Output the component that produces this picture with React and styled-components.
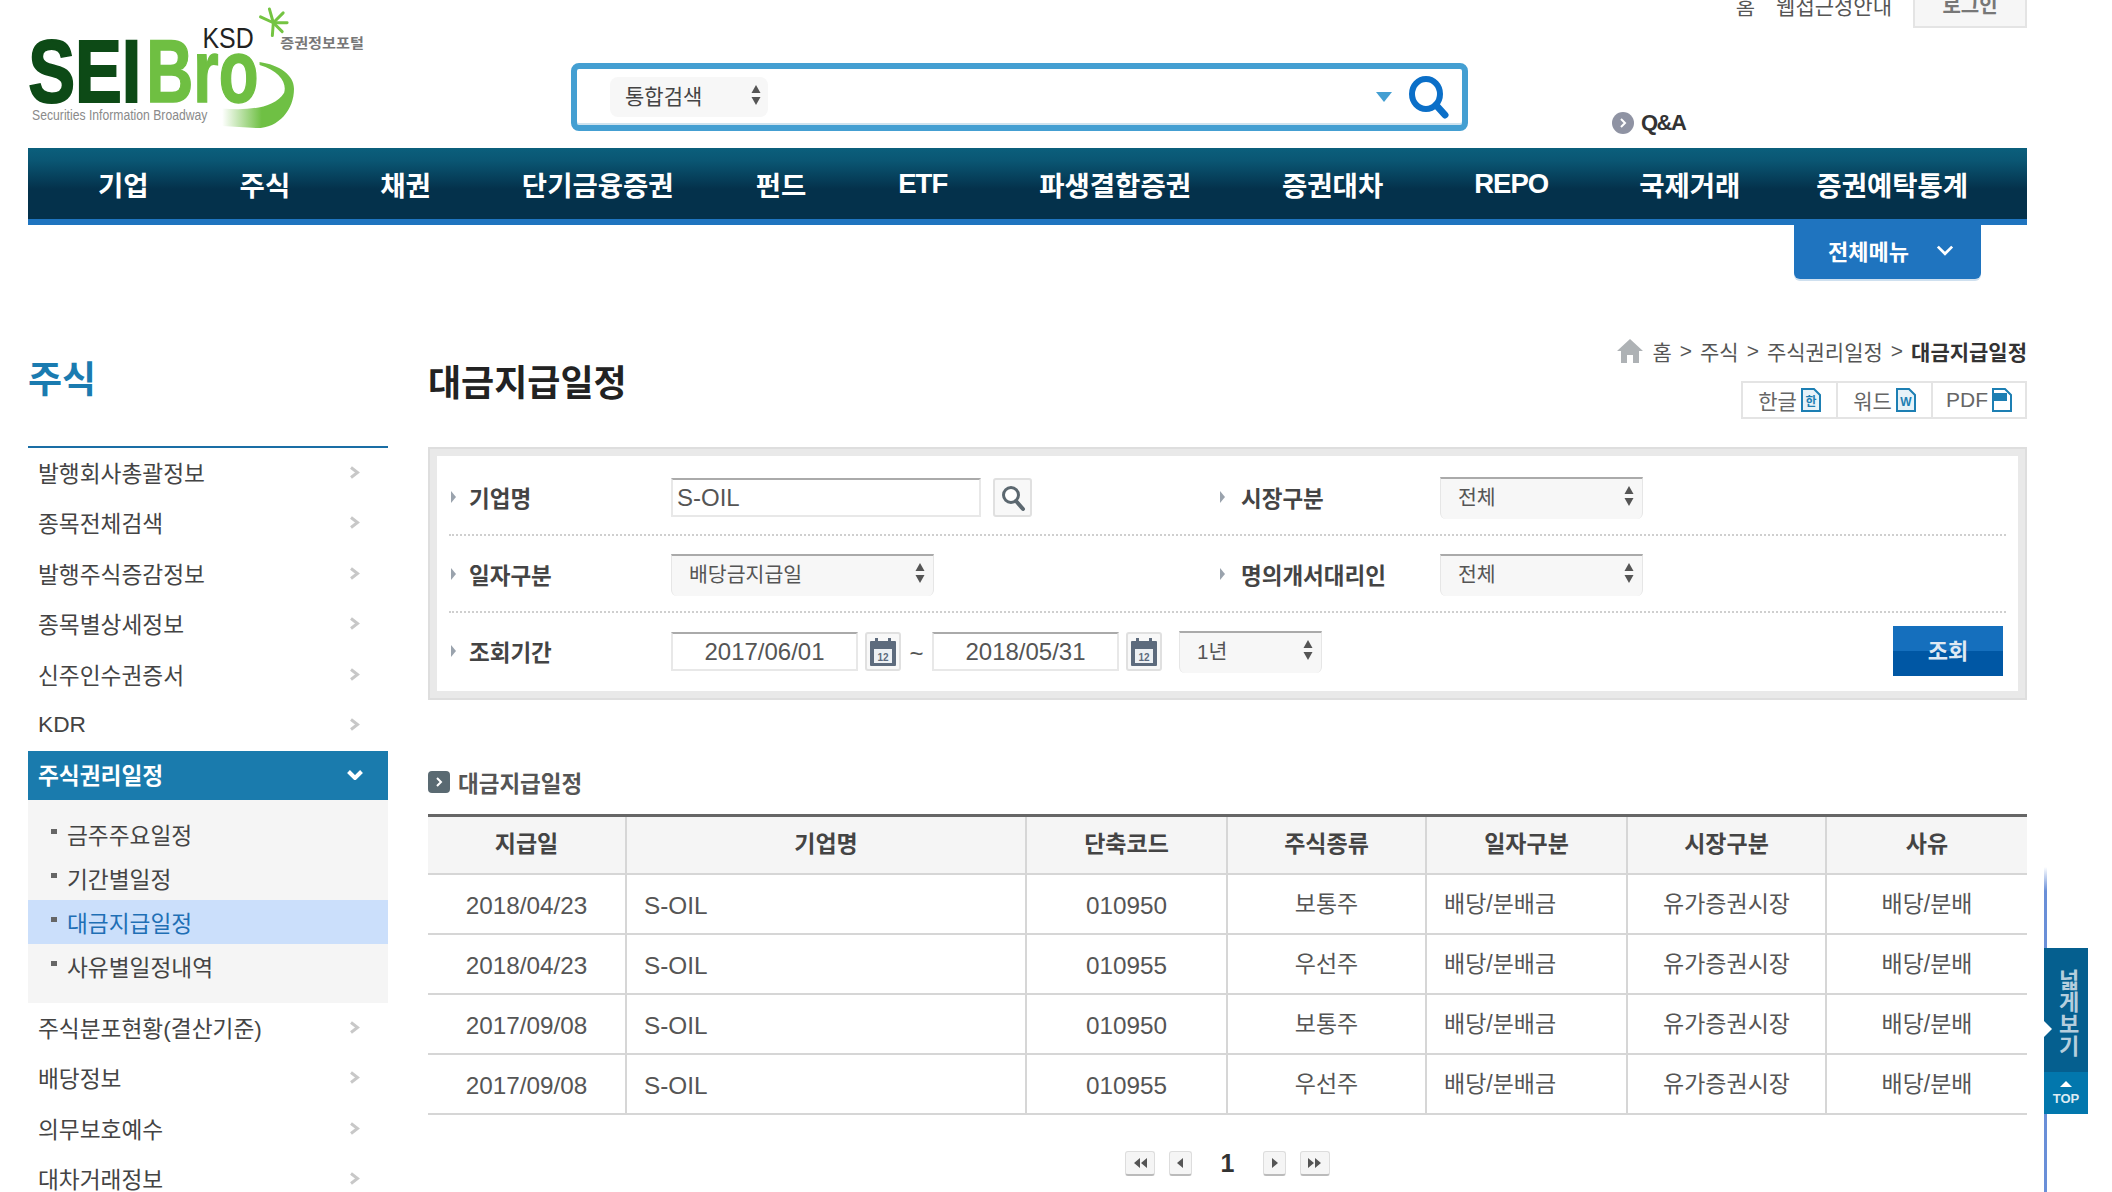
import React from "react";
import styled, { createGlobalStyle } from "styled-components";

const Global = createGlobalStyle`
  html, body { margin: 0; padding: 0; background: #fff; }
  body { font-family: "Liberation Sans", "Noto Sans CJK KR", sans-serif; color: #555; }
  * { box-sizing: border-box; }
  ul { list-style: none; margin: 0; padding: 0; }
`;

const Page = styled.div`
  position: relative;
  width: 2112px;
  height: 1192px;
  overflow: hidden;
  padding: 0 85px 0 28px;
`;

/* ---------- header ---------- */
const Header = styled.header`
  display: grid;
  grid-template-columns: 543px 897px 1fr;
  height: 148px;
`;
const LogoWrap = styled.div`
  padding-top: 6px;
  svg { display: block; }
`;
const SearchBox = styled.div`
  margin-top: 63px;
  height: 68px;
  border: 6px solid #449fd2;
  border-radius: 8px;
  display: flex;
  align-items: center;
  padding: 0 12px 0 33px;
  box-shadow: inset 0 -2px 0 #cfe3ef;
`;
const SearchSelect = styled.div`
  width: 158px;
  height: 40px;
  background: #f7f7f7;
  border-radius: 8px;
  display: flex;
  align-items: center;
  justify-content: space-between;
  padding: 0 6px 4px 15px;
  font-size: 21px;
  color: #444;
`;
const SearchSpacer = styled.div`
  flex: 1;
`;
const DropMark = styled.span`
  width: 0;
  height: 0;
  border-left: 8px solid transparent;
  border-right: 8px solid transparent;
  border-top: 10px solid #449fd2;
  margin-right: 16px;
`;
const HeaderRight = styled.div`
  display: flex;
  flex-direction: column;
`;
const Util = styled.div`
  display: flex;
  justify-content: flex-end;
  align-items: flex-start;
  margin-top: -1px;
`;
const UtilLink = styled.span`
  font-size: 21px;
  line-height: 16px;
  height: 16px;
  color: #555;
  margin-right: ${(p) => p.$gap}px;
`;
const Login = styled.div`
  width: 114px;
  height: 29px;
  background: #f6f6f6;
  border: 2px solid #e4e4e4;
  border-top: 0;
  font-size: 20px;
  font-weight: 700;
  color: #777;
  line-height: 14px;
  text-align: center;
`;
const QnA = styled.div`
  display: flex;
  align-items: center;
  gap: 7px;
  margin: 82px 0 0 144px;
  font-size: 22px;
  font-weight: 700;
  color: #333;
  letter-spacing: -1.5px;
`;
const QnABullet = styled.span`
  width: 22px;
  height: 22px;
  border-radius: 50%;
  background: #8f93a3;
  display: flex;
  align-items: center;
  justify-content: center;
`;

/* ---------- nav ---------- */
const Nav = styled.nav`
  height: 77px;
  display: flex;
  align-items: center;
  padding: 1px 0 0 70px;
  background: linear-gradient(#0b5f7c 0%, #0a5673 18%, #04314b 58%, #04314b 100%);
  border-bottom: 6px solid #1f74bf;
`;
const NavItem = styled.a`
  margin-left: ${(p) => p.$gap}px;
  font-size: 27.5px;
  font-weight: 700;
  color: #fff;
  white-space: nowrap;
  letter-spacing: ${(p) => p.$track || 0}px;
`;
const MenuRow = styled.div`
  display: flex;
  justify-content: flex-end;
  padding-right: 46px;
  height: 54px;
`;
const MenuTab = styled.div`
  width: 187px;
  height: 54px;
  background: #1f74bf;
  border-radius: 0 0 6px 6px;
  box-shadow: 0 2px 0 #cfe0ef;
  display: flex;
  align-items: center;
  justify-content: space-between;
  padding: 0 27px 4px 34px;
  color: #fff;
  font-size: 22px;
  font-weight: 700;
`;

/* ---------- layout ---------- */
const Body = styled.div`
  display: flex;
  gap: 40px;
`;
const Side = styled.aside`
  width: 360px;
  flex: none;
`;
const SideTitle = styled.h2`
  margin: 0;
  height: 167px;
  padding-top: 77px;
  font-size: 37px;
  line-height: 50px;
  font-weight: 700;
  color: #1a7bb0;
`;
const SideList = styled.ul`
  border-top: 2px solid #1a6ea5;
`;
const SideItem = styled.li`
  height: ${(p) => (p.$active ? 49 : 50.5)}px;
  display: flex;
  align-items: center;
  justify-content: space-between;
  padding: 0 ${(p) => (p.$active ? 25 : 28)}px 2px 10px;
  font-size: 22.7px;
  color: ${(p) => (p.$active ? "#fff" : "#444")};
  font-weight: ${(p) => (p.$active ? 700 : 400)};
  background: ${(p) => (p.$active ? "#1a7bad" : "transparent")};
`;
const SubPanel = styled.ul`
  height: 203px;
  padding-top: 12px;
  background: #f5f5f5;
`;
const SubItem = styled.li`
  height: 44px;
  display: flex;
  align-items: center;
  gap: 10px;
  padding-left: 23px;
  font-size: 22.7px;
  color: ${(p) => (p.$on ? "#1f6fb5" : "#444")};
  background: ${(p) => (p.$on ? "#cbdffb" : "transparent")};
`;
const SubBullet = styled.span`
  width: 6px;
  height: 5px;
  background: #666;
  margin-bottom: 6px;
`;
const Main = styled.main`
  width: 1599px;
  flex: none;
`;
const MainHead = styled.div`
  height: 168px;
  display: flex;
  justify-content: space-between;
`;
const PageTitle = styled.h1`
  margin: 0;
  padding-top: 80px;
  font-size: 36px;
  line-height: 50px;
  font-weight: 700;
  color: #222;
`;
const HeadRight = styled.div`
  display: flex;
  flex-direction: column;
  align-items: flex-end;
  padding-top: 58px;
`;
const Crumbs = styled.div`
  display: flex;
  align-items: center;
  gap: 8px;
  height: 28px;
  font-size: 21px;
  color: #555;
  b { color: #333; font-weight: 700; }
`;
const Tools = styled.div`
  display: flex;
  margin-top: 16px;
  height: 38px;
  border: 2px solid #e4e4e4;
`;
const Tool = styled.div`
  width: ${(p) => p.$w}px;
  display: flex;
  align-items: center;
  justify-content: center;
  gap: 4px;
  font-size: 21px;
  color: #666;
  border-right: ${(p) => (p.$last ? 0 : "2px solid #e4e4e4")};
`;

/* ---------- search panel ---------- */
const Panel = styled.section`
  height: 253px;
  border: 2px solid #dedede;
  background: #fff;
  box-shadow: inset 0 0 0 7px #e9e9e9;
  padding: 10px 19px 0 19px;
`;
const Row = styled.div`
  height: ${(p) => (p.$last ? 75 : 77)}px;
  padding-top: 2px;
  display: grid;
  grid-template-columns: 222px 547px 222px 1fr;
  align-items: center;
  border-bottom: ${(p) => (p.$last ? 0 : "2px dotted #cfcfcf")};
`;
const Label = styled.div`
  display: flex;
  align-items: center;
  gap: ${(p) => p.$gap || 13}px;
  padding: 0 0 2px 2px;
  font-size: 22.5px;
  font-weight: 700;
  color: #444;
`;
const LabelMark = styled.span`
  width: 0;
  height: 0;
  border-top: 6px solid transparent;
  border-bottom: 6px solid transparent;
  border-left: 5px solid #9aa3ad;
`;
const Controls = styled.div`
  display: flex;
  align-items: center;
  grid-column: ${(p) => (p.$wide ? "2 / -1" : "auto")};
`;
const TextInput = styled.div`
  width: ${(p) => p.$w}px;
  height: 39px;
  border: 2px solid #e8e8e8;
  border-top-color: #aaa;
  font-size: 24px;
  line-height: 35px;
  color: #555;
  text-align: ${(p) => (p.$center ? "center" : "left")};
  padding-left: ${(p) => (p.$center ? 0 : 4)}px;
`;
const IconBtn = styled.div`
  width: ${(p) => p.$w}px;
  height: 39px;
  margin-left: ${(p) => p.$ml || 0}px;
  border: 2px solid #e0e0e0;
  border-radius: 3px;
  background: #f8f8f8;
  display: flex;
  align-items: center;
  justify-content: center;
`;
const SelectBox = styled.div`
  width: ${(p) => p.$w}px;
  height: 42px;
  margin-left: ${(p) => p.$ml || 0}px;
  background: #f7f7f7;
  border-top: 2px solid #aaa;
  border-left: 1px solid #e6e6e6;
  border-right: 1px solid #e6e6e6;
  border-radius: 0 0 6px 6px;
  display: flex;
  align-items: center;
  justify-content: space-between;
  padding: 0 7px 6px 17px;
  font-size: 20.5px;
  color: #555;
`;
const Tilde = styled.span`
  width: 31px;
  text-align: center;
  font-size: 24px;
  color: #555;
  padding-top: 4px;
`;
const SearchBtn = styled.button`
  width: 110px;
  height: 50px;
  margin: -2px 3px 0 auto;
  padding: 0 0 3px;
  border: 0;
  background: linear-gradient(#156fbd 0%, #156fbd 50%, #0057a4 50%, #0057a4 100%);
  color: #dfe9f3;
  font-family: inherit;
  font-size: 22px;
  font-weight: 700;
`;

/* ---------- table ---------- */
const SectionHead = styled.h3`
  margin: 68px 0 18px;
  height: 28px;
  display: flex;
  align-items: center;
  gap: 8px;
  font-size: 22.5px;
  font-weight: 700;
  color: #555;
`;
const SectionIcon = styled.span`
  width: 22px;
  height: 22px;
  border-radius: 4px;
  background: #5a6a72;
  display: flex;
  align-items: center;
  justify-content: center;
`;
const Table = styled.table`
  width: 1599px;
  table-layout: fixed;
  border-collapse: separate;
  border-spacing: 0;
  border-top: 3px solid #666;
`;
const Th = styled.th`
  height: 58px;
  background: #f5f5f5;
  font-size: 23px;
  font-weight: 700;
  color: #444;
  border-bottom: 2px solid #d6d6d6;
  border-right: ${(p) => (p.$last ? 0 : "2px solid #d6d6d6")};
  padding: 0 0 6px;
`;
const Td = styled.td`
  height: 60px;
  color: #555;
  text-align: ${(p) => (p.$left ? "left" : "center")};
  padding: ${(p) => (p.$ko ? 0 : 3)}px 0 ${(p) => (p.$ko ? 5 : 0)}px ${(p) => (p.$left ? 17 : 0)}px;
  font-size: ${(p) => (p.$ko ? 23 : 24.3)}px;
  border-bottom: 2px solid #d6d6d6;
  border-right: ${(p) => (p.$last ? 0 : "2px solid #d6d6d6")};
`;
const Pager = styled.div`
  display: flex;
  justify-content: center;
  align-items: center;
  height: 30px;
  margin-top: 33px;
  color: #333;
`;
const PageBtn = styled.span`
  width: ${(p) => p.$w}px;
  height: 25px;
  margin-left: ${(p) => p.$ml || 0}px;
  border: 1px solid #ddd;
  border-bottom: 2px solid #bbb;
  border-radius: 3px;
  background: #f5f5f5;
  display: flex;
  align-items: center;
  justify-content: center;
`;
const PageNum = styled.b`
  width: 71px;
  text-align: center;
  font-size: 25px;
  font-weight: 700;
  color: #333;
`;

/* ---------- floating rail ---------- */
const RailLine = styled.div`
  position: absolute;
  left: 2044px;
  top: 867px;
  bottom: 0;
  width: 3px;
  background: linear-gradient(#fff 0, #6a8fd8 24px);
`;
const RailTab = styled.div`
  position: absolute;
  left: 2044px;
  top: 948px;
  width: 44px;
  height: 124px;
  background: #055f8f;
  color: #b5cedd;
  font-size: 22px;
  font-weight: 700;
  writing-mode: vertical-rl;
  text-orientation: upright;
  display: flex;
  align-items: center;
  justify-content: center;
  line-height: 44px;
  padding-top: 6px;
  &::before {
    content: "";
    position: absolute;
    left: 0;
    top: 73px;
    border-top: 8px solid transparent;
    border-bottom: 8px solid transparent;
    border-left: 8px solid #fff;
  }
`;
const RailTop = styled.div`
  position: absolute;
  left: 2044px;
  top: 1072px;
  width: 44px;
  height: 42px;
  background: #0277ad;
  color: #dcebf3;
  font-size: 13px;
  font-weight: 700;
  display: flex;
  flex-direction: column;
  align-items: center;
  justify-content: center;
  gap: 4px;
  &::before {
    content: "";
    border-left: 6px solid transparent;
    border-right: 6px solid transparent;
    border-bottom: 6px solid #fff;
  }
`;

/* ---------- drawings ---------- */
const Logo = () => (
  <svg width="340" height="128" viewBox="0 0 345 130">
    <defs>
      <linearGradient id="swoosh" x1="0" x2="1" y1="0" y2="0">
        <stop offset="0" stopColor="#fff" />
        <stop offset="0.55" stopColor="#6fc044" />
        <stop offset="1" stopColor="#6fc044" />
      </linearGradient>
    </defs>
    <path d="M235 57C255 60 270 70 270 84C270 105 255 124 232 124L197 122L197 104C220 106 250 105 260 88C263 78 255 66 235 60Z" fill="url(#swoosh)" />
    <text x="0" y="98" fontFamily="Liberation Sans" fontWeight="700" fontSize="90" fill="#0d4a16" stroke="#0d4a16" strokeWidth="2" textLength="115" lengthAdjust="spacingAndGlyphs">SEI</text>
    <text x="120" y="98" fontFamily="Liberation Sans" fontWeight="700" fontSize="90" fill="#6fbf42" stroke="#6fbf42" strokeWidth="1.5" textLength="114" lengthAdjust="spacingAndGlyphs">Bro</text>
    <text x="177" y="43" fontFamily="Liberation Sans" fontSize="30" fill="#222" textLength="52" lengthAdjust="spacingAndGlyphs">KSD</text>
    <text x="256" y="43" fontFamily="Noto Sans CJK KR" fontWeight="700" fontSize="14" fill="#777" textLength="85" lengthAdjust="spacingAndGlyphs">증권정보포털</text>
    <text x="4" y="116" fontFamily="Liberation Sans" fontSize="15" fill="#8a8a8a" textLength="178" lengthAdjust="spacingAndGlyphs">Securities Information Broadway</text>
    <g stroke="#74c442" strokeWidth="3" strokeLinecap="round">
      <line x1="249" y1="17" x2="245" y2="3" />
      <line x1="249" y1="17" x2="259" y2="7" />
      <line x1="249" y1="17" x2="263" y2="17" />
      <line x1="249" y1="17" x2="258" y2="26" />
      <line x1="249" y1="17" x2="248" y2="30" />
      <line x1="249" y1="17" x2="236" y2="11" />
    </g>
  </svg>
);

const UpDown = () => (
  <svg width="12" height="22" viewBox="0 0 12 22">
    <path d="M6 1L10.5 9H1.5Z M1.5 13H10.5L6 21Z" fill="#555" />
  </svg>
);

const BigSearch = () => (
  <svg width="42" height="44" viewBox="0 0 42 44" fill="none">
    <ellipse cx="18" cy="19" rx="14" ry="15" stroke="#0b6fc8" strokeWidth="6" />
    <path d="M28 30L37 40" stroke="#0b6fc8" strokeWidth="7" strokeLinecap="round" />
  </svg>
);

const SmallSearch = () => (
  <svg width="28" height="28" viewBox="0 0 28 28" fill="none">
    <circle cx="12" cy="11" r="7.5" stroke="#5c6870" strokeWidth="3" fill="#fff" />
    <path d="M17 17L24 25" stroke="#5c6870" strokeWidth="4" strokeLinecap="round" />
  </svg>
);

const Calendar = () => (
  <svg width="28" height="30" viewBox="0 0 28 30">
    <rect x="1" y="4" width="26" height="25" rx="1" fill="#5d6b7d" />
    <rect x="5" y="12" width="18" height="14" fill="#eef1f4" />
    <rect x="6" y="1" width="3" height="6" fill="#5d6b7d" />
    <rect x="19" y="1" width="3" height="6" fill="#5d6b7d" />
    <text x="14" y="24" textAnchor="middle" fontFamily="Liberation Sans" fontSize="10" fontWeight="700" fill="#5d6b7d">12</text>
  </svg>
);

const Home = () => (
  <svg width="28" height="26" viewBox="0 0 28 26">
    <path d="M14 1L27 13H23V25H17V17H11V25H5V13H1Z" fill="#aeb2b5" />
  </svg>
);

const Doc = ({ mark, filled }) => (
  <svg width="20" height="24" viewBox="0 0 20 24">
    <path d="M1 1H13L19 7V23H1Z" fill={filled ? "#fff" : "#e7f2f8"} stroke="#1d7fb3" strokeWidth="2" />
    {filled ? (
      <rect x="1" y="5" width="14" height="8" fill="#1d7fb3" />
    ) : (
      <text x="10" y="18" textAnchor="middle" fontFamily="Liberation Sans, Noto Sans CJK KR" fontSize="12" fontWeight="700" fill="#1d7fb3">{mark}</text>
    )}
  </svg>
);

const Chevron = ({ w = 16, h = 10, color = "#fff", sw = 2.5 }) => (
  <svg width={w} height={h} viewBox="0 0 16 10" fill="none">
    <path d="M1.5 1.5L8 8L14.5 1.5" stroke={color} strokeWidth={sw} />
  </svg>
);

const ArrowRight = () => (
  <svg width="11" height="13" viewBox="0 0 11 13" fill="none">
    <path d="M2 1.5L8.5 6.5L2 11.5" stroke="#c8c8c8" strokeWidth="3" />
  </svg>
);

const TinyRight = ({ c = "#fff" }) => (
  <svg width="8" height="12" viewBox="0 0 8 12" fill="none">
    <path d="M2 2L6 6L2 10" stroke={c} strokeWidth="2" />
  </svg>
);

const PagerIcon = ({ kind }) => {
  const paths = {
    first: "M8 2V12L2 7Z M15 2V12L9 7Z",
    prev: "M10 2V12L4 7Z",
    next: "M5 2V12L11 7Z",
    last: "M1 2V12L7 7Z M8 2V12L14 7Z",
  };
  return (
    <svg width="16" height="14" viewBox="0 0 16 14">
      <path d={paths[kind]} fill="#555" />
    </svg>
  );
};

/* ---------- data ---------- */
const navItems = [
  ["기업", 0], ["주식", 91], ["채권", 90], ["단기금융증권", 91], ["펀드", 82], ["ETF", 92],
  ["파생결합증권", 92], ["증권대차", 91], ["REPO", 91], ["국제거래", 91], ["증권예탁통계", 76],
];
const sideTop = ["발행회사총괄정보", "종목전체검색", "발행주식증감정보", "종목별상세정보", "신주인수권증서", "KDR"];
const sideSub = ["금주주요일정", "기간별일정", "대금지급일정", "사유별일정내역"];
const sideBottom = ["주식분포현황(결산기준)", "배당정보", "의무보호예수", "대차거래정보"];
const columns = [
  ["지급일", 199], ["기업명", 400], ["단축코드", 201], ["주식종류", 199],
  ["일자구분", 201], ["시장구분", 199], ["사유", 200],
];
const rows = [
  ["2018/04/23", "010950", "보통주"],
  ["2018/04/23", "010955", "우선주"],
  ["2017/09/08", "010950", "보통주"],
  ["2017/09/08", "010955", "우선주"],
];

export default function App() {
  return (
    <Page>
      <Global />
      <Header>
        <LogoWrap><Logo /></LogoWrap>
        <SearchBox>
          <SearchSelect>통합검색<UpDown /></SearchSelect>
          <SearchSpacer />
          <DropMark />
          <BigSearch />
        </SearchBox>
        <HeaderRight>
          <Util>
            <UtilLink $gap={21}>홈</UtilLink>
            <UtilLink $gap={21}>웹접근성안내</UtilLink>
            <Login>로그인</Login>
          </Util>
          <QnA>
            <QnABullet><TinyRight /></QnABullet>
            Q&amp;A
          </QnA>
        </HeaderRight>
      </Header>

      <Nav>
        {navItems.map(([t, g]) => (
          <NavItem key={t} $gap={g} $track={/[A-Z]/.test(t) ? -1 : 0}>{t}</NavItem>
        ))}
      </Nav>
      <MenuRow>
        <MenuTab>전체메뉴<Chevron w={18} h={11} sw={2.5} /></MenuTab>
      </MenuRow>

      <Body>
        <Side>
          <SideTitle>주식</SideTitle>
          <SideList>
            {sideTop.map((t) => (
              <SideItem key={t}>{t}<ArrowRight /></SideItem>
            ))}
            <SideItem $active>주식권리일정<Chevron w={16} h={10} sw={4} /></SideItem>
            <SubPanel>
              {sideSub.map((t) => (
                <SubItem key={t} $on={t === "대금지급일정"}><SubBullet />{t}</SubItem>
              ))}
            </SubPanel>
            {sideBottom.map((t) => (
              <SideItem key={t}>{t}<ArrowRight /></SideItem>
            ))}
          </SideList>
        </Side>

        <Main>
          <MainHead>
            <PageTitle>대금지급일정</PageTitle>
            <HeadRight>
              <Crumbs>
                <Home />
                <span>홈</span><span>&gt;</span><span>주식</span><span>&gt;</span><span>주식권리일정</span><span>&gt;</span><b>대금지급일정</b>
              </Crumbs>
              <Tools>
                <Tool $w={95}>한글<Doc mark="한" /></Tool>
                <Tool $w={95}>워드<Doc mark="W" /></Tool>
                <Tool $w={92} $last>PDF<Doc filled /></Tool>
              </Tools>
            </HeadRight>
          </MainHead>

          <Panel>
            <Row>
              <Label><LabelMark />기업명</Label>
              <Controls>
                <TextInput $w={310}>S-OIL</TextInput>
                <IconBtn $w={39} $ml={12}><SmallSearch /></IconBtn>
              </Controls>
              <Label $gap={16}><LabelMark />시장구분</Label>
              <SelectBox $w={203}>전체<UpDown /></SelectBox>
            </Row>
            <Row>
              <Label><LabelMark />일자구분</Label>
              <Controls>
                <SelectBox $w={263}>배당금지급일<UpDown /></SelectBox>
              </Controls>
              <Label $gap={16}><LabelMark />명의개서대리인</Label>
              <SelectBox $w={203}>전체<UpDown /></SelectBox>
            </Row>
            <Row $last>
              <Label><LabelMark />조회기간</Label>
              <Controls $wide>
                <TextInput $w={187} $center>2017/06/01</TextInput>
                <IconBtn $w={36} $ml={7}><Calendar /></IconBtn>
                <Tilde>~</Tilde>
                <TextInput $w={187} $center>2018/05/31</TextInput>
                <IconBtn $w={36} $ml={7}><Calendar /></IconBtn>
                <SelectBox $w={143} $ml={17}>1년<UpDown /></SelectBox>
                <SearchBtn>조회</SearchBtn>
              </Controls>
            </Row>
          </Panel>

          <SectionHead>
            <SectionIcon><TinyRight /></SectionIcon>
            대금지급일정
          </SectionHead>
          <Table>
            <colgroup>
              {columns.map(([t, w]) => <col key={t} width={w} />)}
            </colgroup>
            <thead>
              <tr>
                {columns.map(([t], i) => (
                  <Th key={t} $last={i === columns.length - 1}>{t}</Th>
                ))}
              </tr>
            </thead>
            <tbody>
              {rows.map(([date, code, kind], i) => (
                <tr key={i}>
                  <Td>{date}</Td>
                  <Td $left>S-OIL</Td>
                  <Td>{code}</Td>
                  <Td $ko>{kind}</Td>
                  <Td $ko $left>배당/분배금</Td>
                  <Td $ko>유가증권시장</Td>
                  <Td $ko $last>배당/분배</Td>
                </tr>
              ))}
            </tbody>
          </Table>
          <Pager>
            <PageBtn $w={30}><PagerIcon kind="first" /></PageBtn>
            <PageBtn $w={23} $ml={14}><PagerIcon kind="prev" /></PageBtn>
            <PageNum>1</PageNum>
            <PageBtn $w={23}><PagerIcon kind="next" /></PageBtn>
            <PageBtn $w={30} $ml={14}><PagerIcon kind="last" /></PageBtn>
          </Pager>
        </Main>
      </Body>

      <RailLine />
      <RailTab>넓게보기</RailTab>
      <RailTop>TOP</RailTop>
    </Page>
  );
}
